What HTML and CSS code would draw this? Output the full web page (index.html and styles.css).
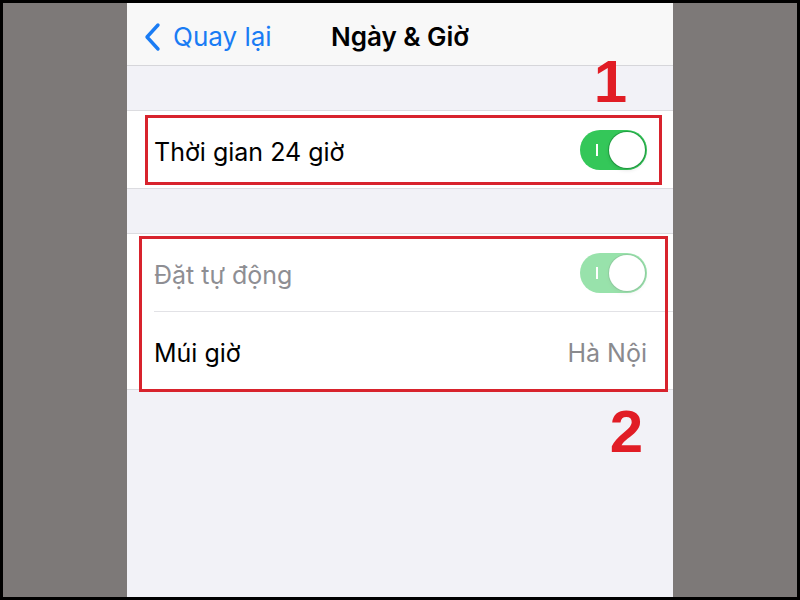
FILE: index.html
```html
<!DOCTYPE html>
<html lang="vi">
<head>
    <meta charset="UTF-8">
    <meta name="viewport" content="width=device-width, initial-scale=1.0">
    <title>Ngày &amp; Giờ</title>
    <link rel="stylesheet" href="styles.css">
</head>
<body>
    <div class="frame">
        <div class="screen">
            <!-- Navigation bar -->
            <div class="navbar">
                <a class="back" href="#">
                    <svg class="chevron" width="18" height="30" viewBox="0 0 18 30">
                        <path d="M14 3 L3 15 L14 27" fill="none" stroke="currentColor" stroke-width="3.4" stroke-linecap="round" stroke-linejoin="round"/>
                    </svg>
                    <span>Quay lại</span>
                </a>
                <div class="title">Ngày &amp; Giờ</div>
            </div>

            <!-- 24 hour clock -->
            <div class="group">
                <div class="row">
                    <span class="label">Thời gian 24 giờ</span>
                    <span class="switch on"><span class="mark"></span><span class="knob"></span></span>
                </div>
                <div class="marker marker-1"></div>
                <div class="step step-1">1</div>
            </div>

            <!-- Automatic time and zone -->
            <div class="group">
                <div class="row">
                    <span class="label muted">Đặt tự động</span>
                    <span class="switch on disabled"><span class="mark"></span><span class="knob"></span></span>
                </div>
                <div class="row">
                    <span class="label">Múi giờ</span>
                    <span class="value">Hà Nội</span>
                </div>
                <div class="marker marker-2"></div>
                <div class="step step-2">2</div>
            </div>
        </div>
    </div>
</body>
</html>
```

FILE: styles.css
```css
html, body {
    margin: 0;
    height: 100%;
}
body {
    background: #000;
    font-family: Inter, "Noto Sans", sans-serif;
}
.frame {
    box-sizing: border-box;
    height: 600px;
    border: 3px solid #000;
    background: #7d7978;
    display: flex;
    justify-content: center;
}
.screen {
    width: 546px;
    background: #f2f2f7;
    display: flex;
    flex-direction: column;
}
.navbar {
    position: relative;
    height: 62px;
    background: #f8f8f8;
    border-bottom: 1px solid #d6d6da;
    display: flex;
    align-items: center;
    justify-content: center;
}
.back {
    position: absolute;
    left: 17px;
    top: 18px;
    display: flex;
    align-items: center;
    gap: 11px;
    color: #1a7cf4;
    text-decoration: none;
    font-size: 26px;
}
.chevron {
    display: block;
}
.title {
    font-size: 26px;
    font-weight: 600;
    color: #000;
    margin-top: 4px;
}
.group {
    position: relative;
    margin-top: 44px;
    background: #fff;
    border-top: 1px solid #dcdce0;
    border-bottom: 1px solid #dcdce0;
}
.row {
    height: 77px;
    margin-left: 27px;
    padding-right: 26px;
    display: flex;
    align-items: center;
    justify-content: space-between;
}
.row + .row {
    border-top: 1px solid #e2e2e6;
}
.label,
.value {
    font-size: 25px;
    margin-top: 5px;
}
.label {
    color: #000;
}
.label.muted {
    color: #8e8e93;
}
.value {
    color: #8a8a8e;
}
.switch {
    position: relative;
    width: 67px;
    height: 40px;
    border-radius: 20px;
    background: #e9e9eb;
}
.switch.on {
    background: #34c759;
}
.switch.disabled {
    opacity: 0.5;
}
.switch .mark {
    position: absolute;
    left: 16px;
    top: 14px;
    width: 2px;
    height: 12px;
    background: #fff;
}
.switch .knob {
    position: absolute;
    right: 2px;
    top: 2px;
    width: 36px;
    height: 36px;
    border-radius: 50%;
    background: #fff;
    box-shadow: 0 0 0 1px rgba(0, 90, 30, 0.35), 0 2px 4px rgba(0, 0, 0, 0.12);
}

/* red callouts drawn on top */
.marker {
    position: absolute;
    border: 3px solid #d8232d;
    pointer-events: none;
}
.marker-1 {
    left: 18px;
    right: 11px;
    top: 4px;
    bottom: 3px;
}
.marker-2 {
    left: 12px;
    right: 5px;
    top: 2px;
    bottom: -3px;
}
.step {
    position: absolute;
    font-family: "Liberation Sans", Arial, sans-serif;
    font-weight: 700;
    font-size: 60px;
    line-height: 1;
    color: #e11d25;
}
.step-1 {
    right: 46px;
    top: -59px;
}
.step-2 {
    right: 30px;
    bottom: -73px;
}
```
